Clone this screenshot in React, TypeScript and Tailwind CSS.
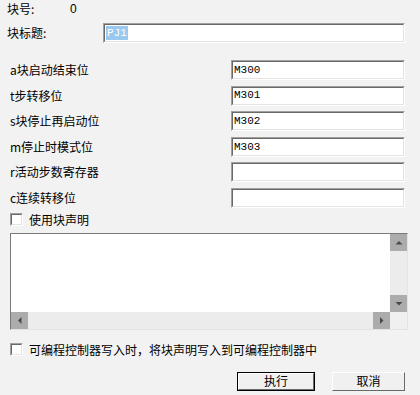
const cjk = "font-['Noto_Sans_CJK_SC','Noto_Sans',sans-serif]";

// classic Win32 sunken edit box
function Sunken({ className, children }: { className?: string; children?: React.ReactNode }) {
  return (
    <div
      className={
        "border border-t-[#a0a0a0] border-l-[#a0a0a0] border-r-white border-b-white " +
        (className ?? "")
      }
    >
      <div className="h-full w-full border border-t-[#696969] border-l-[#696969] border-r-[#e3e3e3] border-b-[#e3e3e3] bg-white overflow-hidden">
        {children}
      </div>
    </div>
  );
}

function CheckBox({ label }: { label: string }) {
  return (
    <div className="flex items-center h-[14px]">
      <div className="w-[13px] h-[13px] border border-t-[#a0a0a0] border-l-[#a0a0a0] border-r-white border-b-white">
        <div className="w-full h-full border border-t-[#696969] border-l-[#696969] border-r-[#e3e3e3] border-b-[#e3e3e3] bg-white" />
      </div>
      <span className={`${cjk} text-[12px] leading-[14px] text-black ml-[6px]`}>{label}</span>
    </div>
  );
}

function ArrowBtn({ dir, className }: { dir: "up" | "down" | "left" | "right"; className?: string }) {
  const pts = {
    up: "1.5,6.5 5,3 8.5,6.5",
    down: "1.5,3 5,6.5 8.5,3",
    left: "6.5,1 3,4.5 6.5,8",
    right: "3,1 6.5,4.5 3,8",
  }[dir];
  return (
    <div className={"bg-[#acacac] flex items-center justify-center " + (className ?? "")}>
      <svg width="9" height="9" viewBox="0 0 9 9">
        <polygon points={pts} fill="#4a4a4a" />
      </svg>
    </div>
  );
}

const rows = [
  { label: "a块启动结束位", value: "M300" },
  { label: "t步转移位", value: "M301" },
  { label: "s块停止再启动位", value: "M302" },
  { label: "m停止时模式位", value: "M303" },
  { label: "r活动步数寄存器", value: "" },
  { label: "c连续转移位", value: "" },
];

function WinButton({ label, primary, className }: { label: string; primary?: boolean; className?: string }) {
  return (
    <div
      className={
        "h-[19px] flex items-stretch " +
        (primary ? "border border-black " : "") +
        (className ?? "")
      }
    >
      <div className="flex-1 border border-t-white border-l-white border-r-[#696969] border-b-[#696969] bg-[#f0f0f0] flex items-center justify-center">
        <span className={`${cjk} text-[12px] leading-none text-black`}>{label}</span>
      </div>
    </div>
  );
}

export default function App() {
  return (
    <div className="w-[420px] h-[395px] bg-[#f2f2f2] overflow-hidden relative">
      <div className="flex items-center h-[16px] pt-[1px] pl-[7px]">
        <span className={`${cjk} text-[12px] text-black w-[63px]`}>块号:</span>
        <span className="font-['Liberation_Sans',sans-serif] text-[12px] text-black">0</span>
      </div>

      <div className="flex items-center mt-[7px] pl-[7px] h-[20px]">
        <span className={`${cjk} text-[12px] text-black w-[96px]`}>块标题:</span>
        <Sunken className="w-[302px] h-[20px]">
          <div className="h-full flex items-center pl-[1px]">
            <span className="bg-[#99c9ef] text-white font-['Liberation_Mono',monospace] text-[11px] leading-[14px] px-[1px]">
              PJ1
            </span>
          </div>
        </Sunken>
      </div>

      <div className="flex flex-col gap-[5.6px] mt-[17px]">
        {rows.map((r) => (
          <div key={r.label} className="flex items-center h-[20px] pl-[10px]">
            <span className={`${cjk} text-[12px] text-black w-[221px] leading-none`}>{r.label}</span>
            <Sunken className="w-[174px] h-[20px]">
              <div className="h-full flex items-center pl-[1px] font-['Liberation_Mono',monospace] text-[11px] text-black">
                {r.value}
              </div>
            </Sunken>
          </div>
        ))}
      </div>

      <div className="pl-[10px] mt-[5px]">
        <CheckBox label="使用块声明" />
      </div>

      <div className="ml-[10px] mt-[6px] w-[398px] h-[97px] border border-t-[#7a7a7a] border-l-[#7a7a7a] border-r-[#e3e3e3] border-b-[#e3e3e3] bg-white flex flex-col">
        <div className="flex flex-1">
          <div className="flex-1" />
          <div className="w-[17px] flex flex-col bg-[#ececec]">
            <ArrowBtn dir="up" className="h-[17px]" />
            <div className="flex-1" />
            <ArrowBtn dir="down" className="h-[17px]" />
          </div>
        </div>
        <div className="h-[17px] flex">
          <div className="flex-1 flex bg-[#ececec]">
            <ArrowBtn dir="left" className="w-[17px]" />
            <div className="flex-1" />
            <ArrowBtn dir="right" className="w-[17px]" />
          </div>
          <div className="w-[17px] bg-[#f0f0f0]" />
        </div>
      </div>

      <div className="pl-[10px] mt-[13px]">
        <CheckBox label="可编程控制器写入时，将块声明写入到可编程控制器中" />
      </div>

      <div className="flex mt-[15px] pl-[237px] gap-[17px]">
        <WinButton label="执行" primary className="w-[78px]" />
        <WinButton label="取消" className="w-[73px]" />
      </div>
    </div>
  );
}
